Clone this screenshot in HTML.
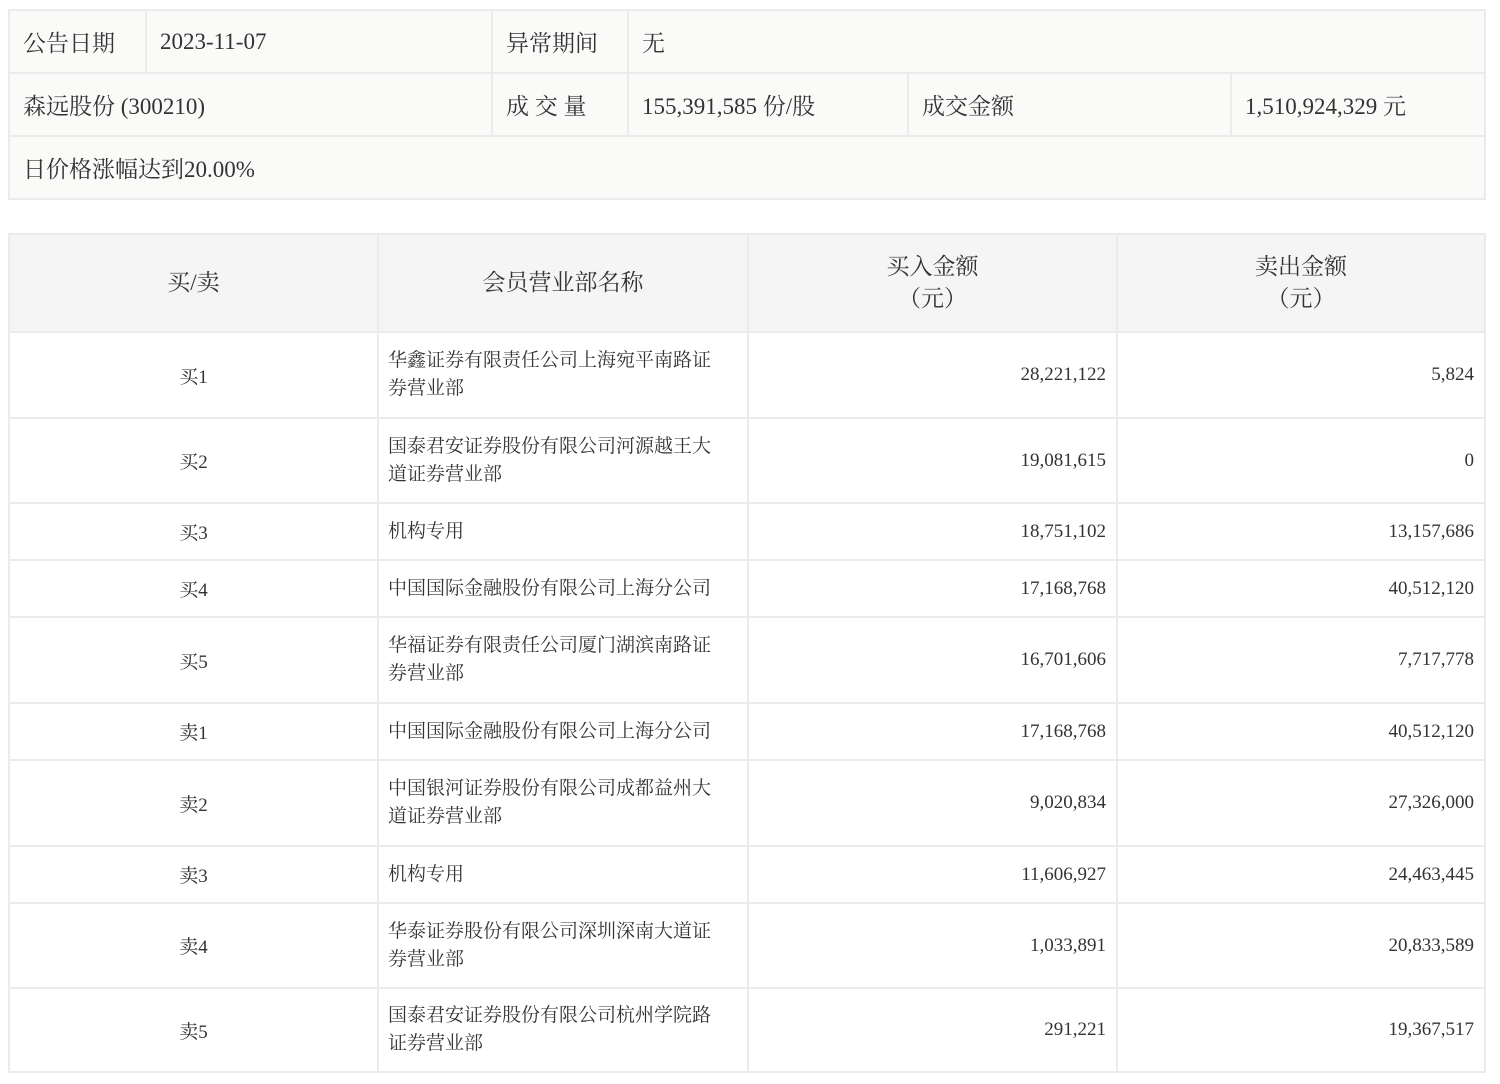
<!DOCTYPE html>
<html><head><meta charset="utf-8"><style>
body{margin:0;background:#fff;font-family:"Liberation Serif","Noto Serif CJK SC","Noto Serif CJK",serif;color:#333;}
table{position:absolute;left:8px;border-collapse:collapse;table-layout:fixed;width:1476px;}
td,th{border:2px solid #ebebeb;padding:0;}
#t1{top:9px;background:#fafaf9;font-size:23px;}
#t1 td{padding-left:13px;}
#t2{top:233px;font-size:19px;}
#t2 th{background:#f5f5f5;font-weight:normal;font-size:23px;line-height:32px;text-align:center;}
#t2 td.c{text-align:center}
#t2 td.n{padding-left:9px;line-height:28px;padding-right:24px}
#t2 td.r{text-align:right;padding-right:10px}
</style></head><body>
<table id="t1">
<colgroup><col style="width:137px"><col style="width:346px"><col style="width:136px"><col style="width:280px"><col style="width:323px"><col style="width:254px"></colgroup>
<tr style="height:63px"><td>公告日期</td><td>2023-11-07</td><td>异常期间</td><td colspan="3">无</td></tr>
<tr style="height:63px"><td colspan="2">森远股份 (300210)</td><td>成 交 量</td><td>155,391,585 份/股</td><td>成交金额</td><td>1,510,924,329 元</td></tr>
<tr style="height:63px"><td colspan="6">日价格涨幅达到20.00%</td></tr>
</table>
<table id="t2">
<colgroup><col style="width:369px"><col style="width:370px"><col style="width:369px"><col style="width:368px"></colgroup>
<tr style="height:98px"><th>买/卖</th><th>会员营业部名称</th><th>买入金额<br>（元）</th><th>卖出金额<br>（元）</th></tr>
<tr style="height:86px"><td class="c">买1</td><td class="n">华鑫证券有限责任公司上海宛平南路证券营业部</td><td class="r">28,221,122</td><td class="r">5,824</td></tr>
<tr style="height:85px"><td class="c">买2</td><td class="n">国泰君安证券股份有限公司河源越王大道证券营业部</td><td class="r">19,081,615</td><td class="r">0</td></tr>
<tr style="height:57px"><td class="c">买3</td><td class="n">机构专用</td><td class="r">18,751,102</td><td class="r">13,157,686</td></tr>
<tr style="height:57px"><td class="c">买4</td><td class="n">中国国际金融股份有限公司上海分公司</td><td class="r">17,168,768</td><td class="r">40,512,120</td></tr>
<tr style="height:86px"><td class="c">买5</td><td class="n">华福证券有限责任公司厦门湖滨南路证券营业部</td><td class="r">16,701,606</td><td class="r">7,717,778</td></tr>
<tr style="height:57px"><td class="c">卖1</td><td class="n">中国国际金融股份有限公司上海分公司</td><td class="r">17,168,768</td><td class="r">40,512,120</td></tr>
<tr style="height:86px"><td class="c">卖2</td><td class="n">中国银河证券股份有限公司成都益州大道证券营业部</td><td class="r">9,020,834</td><td class="r">27,326,000</td></tr>
<tr style="height:57px"><td class="c">卖3</td><td class="n">机构专用</td><td class="r">11,606,927</td><td class="r">24,463,445</td></tr>
<tr style="height:85px"><td class="c">卖4</td><td class="n">华泰证券股份有限公司深圳深南大道证券营业部</td><td class="r">1,033,891</td><td class="r">20,833,589</td></tr>
<tr style="height:84px"><td class="c">卖5</td><td class="n">国泰君安证券股份有限公司杭州学院路证券营业部</td><td class="r">291,221</td><td class="r">19,367,517</td></tr>
</table>
</body></html>
